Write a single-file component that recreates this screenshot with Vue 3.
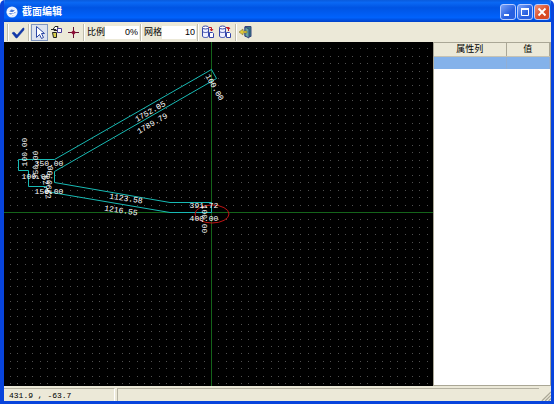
<script setup>
import { ref } from 'vue'

const scale = ref('0%')
const grid = ref('10')
const position = ref('431.9 , -63.7')

const dimensions = [
  { text: '1752.05', x: 150, y: 111, angle: -30 },
  { text: '1789.79', x: 152, y: 123, angle: -30 },
  { text: '100.00', x: 215, y: 87, angle: 60 },
  { text: '100.00', x: 24, y: 152, angle: -90 },
  { text: '350.00', x: 49, y: 163, angle: 0 },
  { text: '350.00', x: 35, y: 165, angle: -90 },
  { text: '100.00', x: 36, y: 176, angle: 0 },
  { text: '150.00', x: 49, y: 191, angle: 0 },
  { text: '290.00', x: 49, y: 180, angle: -86 },
  { text: '52.52', x: 47, y: 187, angle: 80 },
  { text: '1123.58', x: 126, y: 198, angle: 8 },
  { text: '1216.55', x: 121, y: 210, angle: 8 },
  { text: '391.72', x: 204, y: 205, angle: 0 },
  { text: '400.00', x: 204, y: 218, angle: 0 },
  { text: '100.00', x: 205, y: 219, angle: 90 },
]

// grid dots spread out from the origin, 9 cells to 67 units
const origin = { x: 211, y: 212 }
const dots = []
for (let row = -23; row <= 100; row++) {
  for (let column = -28; column <= 200; column++) {
    const x = origin.x + Math.round((column * 67) / 9)
    const y = origin.y + Math.round((row * 67) / 9)
    dots.push(`M${x} ${y}h1v1h-1z`)
  }
}
const dotPath = dots.join('')
</script>

<template>
  <div class="window">
    <header class="titlebar">
      <svg class="app-icon" viewBox="0 0 14 14" aria-hidden="true">
        <circle cx="7" cy="7" r="6.500" fill="#e4eeff" />
        <path d="M3 8l3-4 4 1 1 3-3 3-3-1z" fill="#4a78d8" />
        <path d="M1 7l7 1 4-3M5 11l6-2" stroke="#fff" stroke-width="1.500" fill="none" />
      </svg>
      <h1 class="title">截面编辑</h1>
      <div class="window-buttons">
        <button class="win-button" type="button" aria-label="最小化">
          <svg viewBox="0 0 14 14"><path d="M3 10h5" stroke="#fff" stroke-width="2" /></svg>
        </button>
        <button class="win-button" type="button" aria-label="最大化">
          <svg viewBox="0 0 14 14">
            <path d="M3.500 4.500h7v6h-7z" stroke="#fff" fill="none" />
            <path d="M3 4h8" stroke="#fff" stroke-width="2" />
          </svg>
        </button>
        <button class="win-button win-close" type="button" aria-label="关闭">
          <svg viewBox="0 0 14 14"><path d="M3.500 3.500l7 7m0-7l-7 7" stroke="#fff" stroke-width="1.800" /></svg>
        </button>
      </div>
    </header>

    <div class="toolbar">
      <span class="grip"></span>
      <button class="tool" type="button" aria-label="确定">
        <svg viewBox="0 0 16 16"><path d="M2 9l2-1 3 3 6-7h1v2L7 14H6z" fill="#1238a8" stroke="#1238a8" stroke-width="0.500" /></svg>
      </button>
      <span class="separator"></span>
      <button class="tool active" type="button" aria-label="选择">
        <svg viewBox="0 0 16 16"><path d="M4.500 1.500v11l3-3 2 4 2-1-2-4h3z" fill="#fff" stroke="#2b46a5" /></svg>
      </button>
      <button class="tool" type="button" aria-label="编辑">
        <svg viewBox="0 0 16 16">
          <path d="M5 5.500l2-3h3l-1 4H6z" fill="#fff" stroke="#222" />
          <path d="M3 5.500h5M4.500 8.500h4v5h-3z" fill="#d9d04a" stroke="#222" />
          <path d="M9.500 4.500h4v4h-4z" fill="#fff" stroke="#47399d" />
        </svg>
      </button>
      <button class="tool" type="button" aria-label="节点">
        <svg viewBox="0 0 16 16">
          <path d="M8.500 3v11M3 8.500h11" stroke="#641032" />
          <path d="M6 8.500L8.500 6 11 8.500 8.500 11z" fill="#8c0c34" />
        </svg>
      </button>
      <span class="separator"></span>
      <label class="field">比例<input v-model="scale" type="text" /></label>
      <span class="separator"></span>
      <label class="field">网格<input v-model="grid" type="text" /></label>
      <span class="separator"></span>
      <button v-for="name in ['导入', '导出']" :key="name" class="tool" type="button" :aria-label="name">
        <svg viewBox="0 0 16 16">
          <path d="M2.500 4v8c0 2 6 2 6 0V4z" fill="#eef0ff" stroke="#3446aa" />
          <ellipse cx="5.500" cy="3.500" rx="3" ry="1.500" fill="#fff" stroke="#3446aa" />
          <path d="M2.500 7c0 2 6 2 6 0" fill="none" stroke="#3446aa" />
          <path d="M9.500 8.500h3l1 1v4h-4z" fill="#fff" stroke="#3446aa" />
          <path v-if="name === '导入'" d="M9 3.500h2.500V7M10 5l1.500 2L13 5" fill="none" stroke="#c01828" />
          <path v-else d="M9 3.500h2.500V7M10 5l1.500-2L13 5" fill="none" stroke="#c01828" />
        </svg>
      </button>
      <span class="separator"></span>
      <button class="tool" type="button" aria-label="退出">
        <svg viewBox="0 0 16 16">
          <path d="M7 2.500h6v10H7z" fill="#307b80" stroke="#354580" />
          <path d="M7 3l4 2v9l-4-2z" fill="#65a5a0" stroke="#354580" />
          <path d="M1 8l4-3v2h4v2H5v2z" fill="#e1c83a" stroke="#6b6630" stroke-width="0.500" />
        </svg>
      </button>
    </div>

    <main class="workspace">
      <div class="canvas">
        <svg class="drawing" viewBox="4 42 429 344" preserveAspectRatio="xMinYMin slice">
          <path class="dots" :d="dotPath" />
          <path class="axis" d="M211.500 42V2000M4 212.500H2000" />
          <path
            class="outline"
            d="M211.500 69.500L54.500 159.500H18.500V170.500H28.500V186.500H45.500L49 192L170 212.500H211.500V202.500H170L54.500 182.500V171.500L216.500 78.500Z"
          />
          <ellipse class="marker" cx="212" cy="214" rx="17" ry="9" />
          <text
            v-for="(item, index) in dimensions"
            :key="index"
            class="dimension"
            :transform="`translate(${item.x} ${item.y}) rotate(${item.angle})`"
            y="3"
          >{{ item.text }}</text>
        </svg>
      </div>

      <aside class="properties">
        <table class="property-table">
          <thead>
            <tr><th class="name-column">属性列</th><th>值</th></tr>
          </thead>
          <tbody>
            <tr><td></td><td></td></tr>
          </tbody>
        </table>
      </aside>
    </main>

    <footer class="statusbar">
      <span class="status-position">{{ position }}</span>
      <span class="status-message"></span>
      <svg class="resize-grip" viewBox="0 0 12 12" aria-hidden="true">
        <path d="M1 12L12 1M5 12l7-7M9 12l3-3" stroke="#aaa796" stroke-width="1.500" />
      </svg>
    </footer>
  </div>
</template>

<style>
body {
  margin: 0;
  background: #fff;
}
</style>

<style scoped>
.window {
  box-sizing: border-box;
  display: flex;
  flex-direction: column;
  min-height: 100vh;
  border: solid #0844dc;
  border-width: 0 3px 3px 4px;
  border-radius: 5px 5px 0 0;
  overflow: hidden;
  background: #ece9d8;
  color: #000;
  font: 10px/14px 'Liberation Sans', 'Noto Sans CJK SC', sans-serif;
}

.titlebar {
  box-sizing: border-box;
  display: flex;
  align-items: center;
  gap: 4px;
  height: 22px;
  padding: 2px 1px 0 2px;
  background: linear-gradient(#0a5bdc, #0a68f4 12%, #0054e3 35%, #0062fc 80%, #0040c8);
}

.app-icon {
  width: 12px;
  height: 12px;
}

.title {
  margin: 0;
  color: #fff;
  font-size: 10px;
  font-weight: bold;
}

.window-buttons {
  display: flex;
  gap: 1px;
  margin-left: auto;
}

.win-button {
  box-sizing: border-box;
  width: 16px;
  height: 16px;
  padding: 0;
  border: 1px solid #b8ccff;
  border-radius: 3px;
  background: linear-gradient(135deg, #7ba3f8, #2860e0 60%);
}

.win-button svg {
  display: block;
  width: 14px;
  height: 14px;
}

.win-close {
  background: linear-gradient(135deg, #ef9278, #d94a24 60%);
}

.toolbar {
  display: flex;
  align-items: center;
  height: 20px;
  padding: 0 2px;
}

.grip,
.separator {
  width: 1px;
  height: 17px;
  margin: 0 1px;
  border-right: 1px solid #fff;
  background: #c0bdad;
}

.tool {
  box-sizing: border-box;
  width: 17px;
  height: 17px;
  padding: 0;
  border: 0;
  background: none;
}

.tool svg {
  display: block;
  width: 16px;
  height: 16px;
}

.tool.active {
  border: 1px solid #8096bf;
  background: #dce2ef;
}

.field {
  display: flex;
  align-items: center;
  padding-left: 1px;
  font-size: 9px;
}

.field input {
  box-sizing: border-box;
  width: 34px;
  height: 13px;
  padding: 0 1px;
  border: 0;
  background: #fff;
  font: 9px/13px 'Liberation Sans', sans-serif;
  text-align: right;
}

.workspace {
  display: flex;
  flex: 1;
}

.canvas {
  position: relative;
  flex: 1;
  min-width: 0;
  overflow: hidden;
  background: #000;
}

.drawing {
  position: absolute;
  inset: 0;
  width: 100%;
  height: 100%;
}

.dots {
  fill: #505050;
}

.axis {
  fill: none;
  stroke: #14641a;
}

.outline {
  fill: none;
  stroke: #18bab4;
}

.marker {
  fill: none;
  stroke: #c01414;
}

.dimension {
  fill: #fff;
  font: 8px 'Liberation Mono', monospace;
  text-anchor: middle;
}

.properties {
  box-sizing: border-box;
  width: 118px;
  border: 1px solid #aaa796;
  background: #fff;
}

.property-table {
  width: 100%;
  border-collapse: collapse;
  table-layout: fixed;
}

th {
  height: 13px;
  padding: 0;
  border-right: 1px solid #aaa796;
  border-bottom: 1px solid #c5c2b3;
  background: #ece9d8;
  font-size: 9px;
  line-height: 13px;
  font-weight: normal;
}

.name-column {
  width: 62%;
}

td {
  height: 12px;
  padding: 0;
  border-right: 1px solid #91afd5;
  background: #84b2ea;
}

.statusbar {
  box-sizing: border-box;
  display: flex;
  align-items: stretch;
  gap: 2px;
  height: 15px;
  padding-top: 2px;
  font: 8px/13px 'Liberation Mono', monospace;
}

.status-position {
  box-sizing: border-box;
  width: 111px;
  padding-left: 5px;
  border-top: 1px solid #b5b2a2;
  border-right: 1px solid #fff;
}

.status-message {
  flex: 1;
  border-top: 1px solid #b5b2a2;
  border-left: 1px solid #b5b2a2;
}

.resize-grip {
  width: 10px;
  height: 10px;
  align-self: flex-end;
}
</style>
